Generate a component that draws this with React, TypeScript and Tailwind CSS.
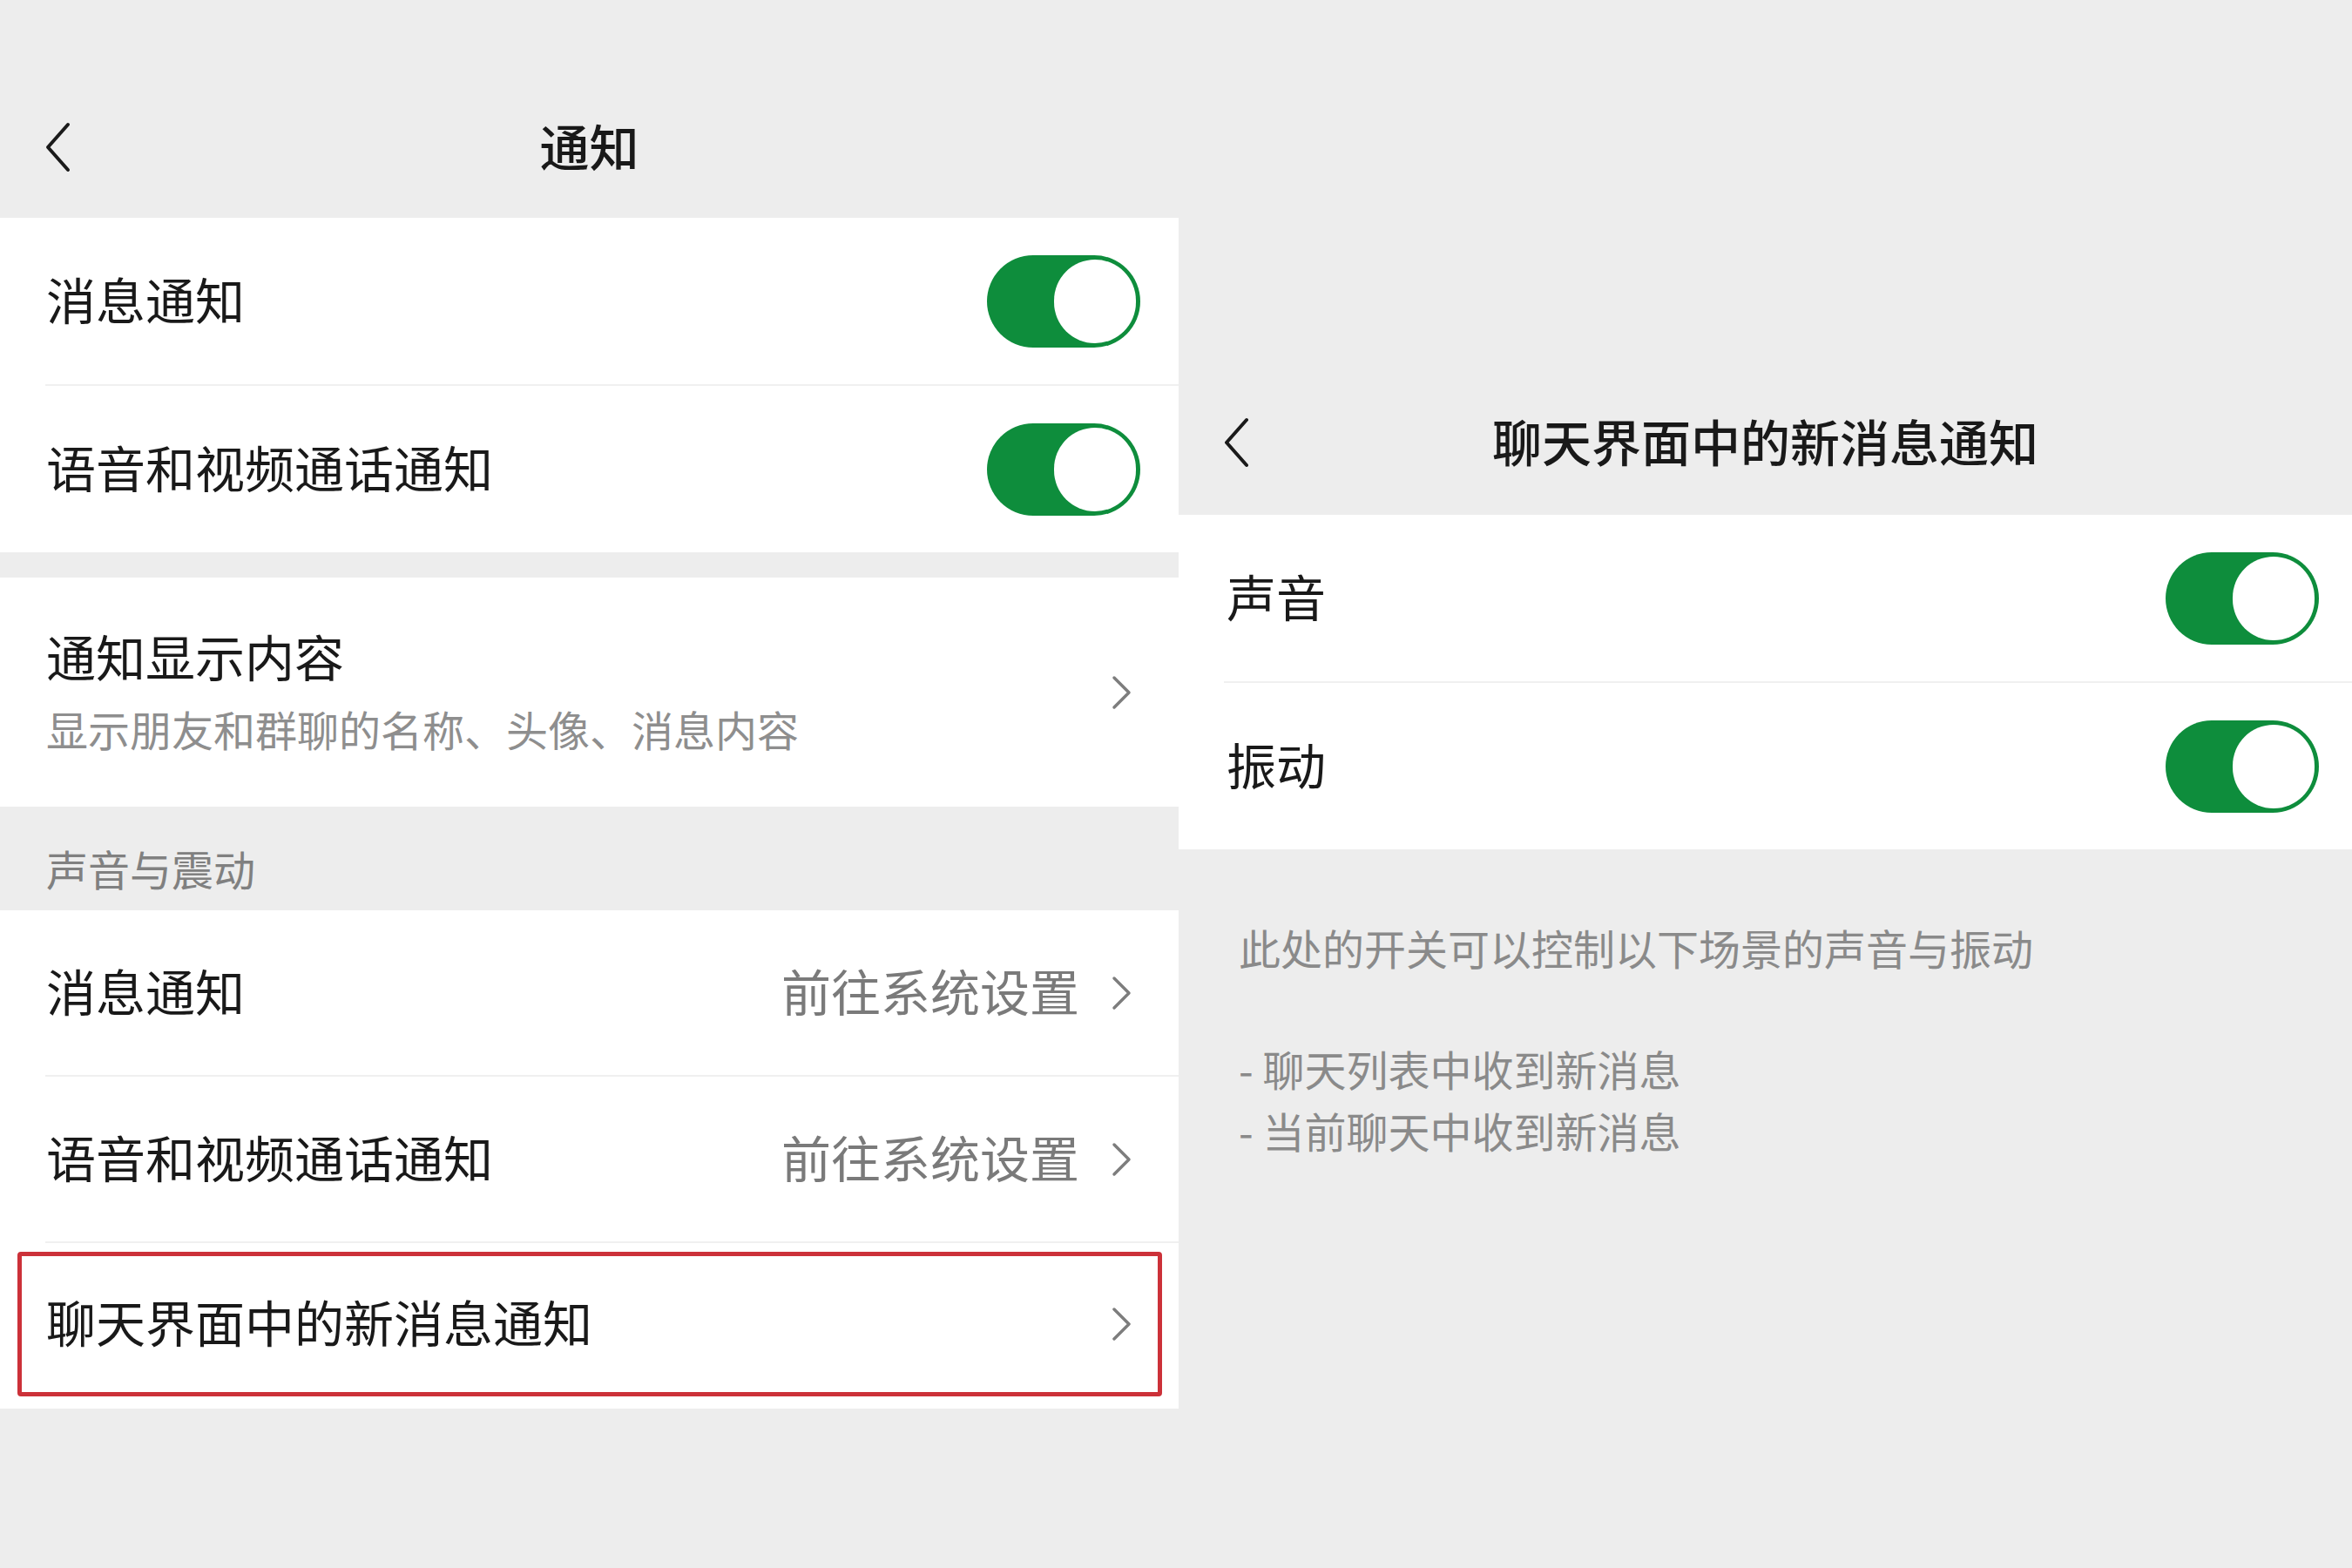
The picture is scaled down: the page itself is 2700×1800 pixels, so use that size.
import React from 'react';

const font = { fontFamily: '"Noto Sans CJK SC", "Noto Sans", sans-serif' };

const BackIcon = () => (
  <svg width="32" height="58" viewBox="0 0 32 58" fill="none">
    <path d="M28 3 L5 29 L28 55" stroke="#1a1a1a" strokeWidth="4" strokeLinecap="round" strokeLinejoin="round" />
  </svg>
);

const Chevron = () => (
  <svg width="24" height="40" viewBox="0 0 24 40" fill="none">
    <path d="M3 3 L20 20 L3 37" stroke="#7d7d7d" strokeWidth="3.5" strokeLinecap="round" strokeLinejoin="round" />
  </svg>
);

const Toggle = () => (
  <div className="flex h-[106px] w-[176px] items-center justify-end rounded-full bg-[#0e8d3c] p-[5px]">
    <div className="h-[96px] w-[94px] rounded-full bg-white" />
  </div>
);

const NavBar = ({ title }: { title: string }) => (
  <div className="grid h-[82px] grid-cols-[1fr_auto_1fr] items-center">
    <div className="pl-[50px]">
      <BackIcon />
    </div>
    <div className="pb-[6px] text-[57px] font-medium leading-none text-[#191919]">{title}</div>
    <div />
  </div>
);

const Divider = () => <div className="ml-[52px] h-[2px] bg-[#f0f0f0]" />;

const ToggleRow = ({ label, h }: { label: string; h: string }) => (
  <div className={`flex ${h} items-center justify-between pl-[53px] pr-[44px]`}>
    <span className="pb-[7px] text-[57px] leading-none text-[#191919]">{label}</span>
    <Toggle />
  </div>
);

const LinkRow = ({ label, value, h }: { label: string; value?: string; h: string }) => (
  <div className={`flex ${h} items-center justify-between pl-[53px] pr-[53px]`}>
    <span className="pb-[7px] text-[57px] leading-none text-[#191919]">{label}</span>
    <div className="flex items-center gap-[37px]">
      {value && <span className="pb-[7px] text-[57px] leading-none text-[#7a7a7a]">{value}</span>}
      <Chevron />
    </div>
  </div>
);

export default function App() {
  return (
    <div className="flex h-[1800px] w-[2700px] bg-[#ededed]" style={font}>
      {/* left: 通知 */}
      <div className="flex w-[1353px] flex-col">
        <div className="h-[250px] pt-[128px]">
          <NavBar title="通知" />
        </div>

        <div className="bg-white">
          <ToggleRow label="消息通知" h="h-[191px]" />
          <Divider />
          <ToggleRow label="语音和视频通话通知" h="h-[191px]" />
        </div>

        <div className="h-[29px]" />

        <div className="flex h-[263px] items-center justify-between bg-white pl-[53px] pr-[53px]">
          <div className="flex flex-col pb-[6px]">
            <span className="text-[57px] leading-[70px] text-[#191919]">通知显示内容</span>
            <span className="mt-[19px] text-[48px] leading-[60px] text-[#8e8e8e]">
              显示朋友和群聊的名称、头像、消息内容
            </span>
          </div>
          <Chevron />
        </div>

        <div className="h-[119px] pl-[53px] pt-[40px] text-[48px] leading-[60px] text-[#808080]">声音与震动</div>

        <div className="bg-white">
          <LinkRow label="消息通知" value="前往系统设置" h="h-[189px]" />
          <Divider />
          <LinkRow label="语音和视频通话通知" value="前往系统设置" h="h-[189px]" />
          <Divider />
          <div className="h-[190px] pb-[14px] pl-[20px] pr-[19px] pt-[10px]">
            <div className="flex h-full items-center justify-between rounded-[4px] border-[5px] border-[#cc3139] pl-[28px] pr-[29px]">
              <span className="pb-[7px] text-[57px] leading-none text-[#191919]">聊天界面中的新消息通知</span>
              <Chevron />
            </div>
          </div>
        </div>
      </div>

      {/* right: 聊天界面中的新消息通知 */}
      <div className="flex flex-1 flex-col">
        <div className="h-[591px] pt-[467px]">
          <NavBar title="聊天界面中的新消息通知" />
        </div>

        <div className="bg-white">
          <div className="flex h-[191px] items-center justify-between pl-[55px] pr-[38px]">
            <span className="pb-[7px] text-[57px] leading-none text-[#191919]">声音</span>
            <Toggle />
          </div>
          <Divider />
          <div className="flex h-[191px] items-center justify-between pl-[55px] pr-[38px]">
            <span className="pb-[7px] text-[57px] leading-none text-[#191919]">振动</span>
            <Toggle />
          </div>
        </div>

        <div className="flex flex-col pl-[69px] pt-[77px] text-[48px] leading-[71px] text-[#8a8a8a]">
          <span>此处的开关可以控制以下场景的声音与振动</span>
          <span className="mt-[68px]">- 聊天列表中收到新消息</span>
          <span>- 当前聊天中收到新消息</span>
        </div>
      </div>
    </div>
  );
}
